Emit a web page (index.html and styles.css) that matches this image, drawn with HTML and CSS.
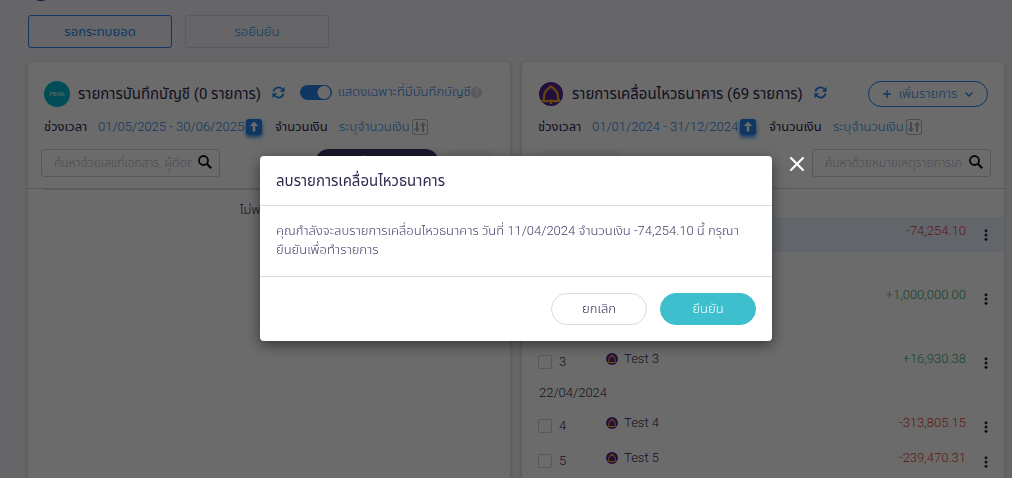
FILE: index.html
```html
<!DOCTYPE html>
<html lang="th">
<head>
<meta charset="utf-8">
<meta name="viewport" content="width=device-width, initial-scale=1">
<title>กระทบยอดธนาคาร</title>
<link rel="stylesheet" href="styles.css">
</head>
<body>
<svg class="defs" aria-hidden="true">
  <symbol id="bank" viewBox="0 0 24 24">
    <circle cx="12" cy="12" r="12" fill="#552494"/>
    <path d="M12 4.500C9 6.500 5.300 9.500 5.300 13C5.300 15.500 5.300 17 3.800 18.600C6.500 19.600 9 19.200 12 18.600C15 19.200 17.500 19.600 20.200 18.600C18.700 17 18.700 15.500 18.700 13C18.700 9.500 15 6.500 12 4.500ZM12 18V22" fill="none" stroke="#f0a818" stroke-width="2.200"/>
  </symbol>
  <symbol id="refresh" viewBox="0 0 16 16">
    <path d="M1.800 7A6.200 6.200 0 0 1 12.600 4M14.200 9A6.200 6.200 0 0 1 3.400 12" fill="none" stroke="currentColor" stroke-width="2.200"/>
    <path d="M15.500 1V7H9.500ZM.5 15V9H6.500Z" fill="currentColor"/>
  </symbol>
  <symbol id="search" viewBox="0 0 14 14">
    <circle cx="5.500" cy="5.500" r="4.500" fill="none" stroke="currentColor" stroke-width="1.800"/>
    <path d="M8.800 8.800L13.200 13.200" stroke="currentColor" stroke-width="2.200"/>
  </symbol>
  <symbol id="up" viewBox="0 0 16 16">
    <path d="M8 2.500L12.300 7H9.300V12.500H6.700V7H3.700Z" fill="currentColor"/>
  </symbol>
  <symbol id="sort" viewBox="0 0 16 16">
    <path d="M5 13L1.800 9.500H4V3H6V9.500H8.200ZM11 3L14.200 6.500H12V13H10V6.500H7.800Z" fill="currentColor"/>
  </symbol>
  <symbol id="dots" viewBox="0 0 4 12">
    <circle cx="2" cy="1.700" r="1.500"/><circle cx="2" cy="6" r="1.500"/><circle cx="2" cy="10.300" r="1.500"/>
  </symbol>
</svg>

<main class="page">
  <span class="account-dot"></span>
  <nav class="tabs">
    <button class="tab tab-active" type="button">รอกระทบยอด</button>
    <button class="tab" type="button">รอยืนยัน</button>
  </nav>

  <div class="panels">
    <section class="panel">
      <header class="panel-head">
        <div class="title-row">
          <span class="peak">PEAK</span>
          <h2 class="title">รายการบันทึกบัญชี (0 รายการ)</h2>
          <button class="icon-btn" type="button" aria-label="รีเฟรช"><svg class="refresh"><use href="#refresh"/></svg></button>
          <input class="switch" id="only" type="checkbox" checked>
          <label class="switch-label" for="only">แสดงเฉพาะที่มีบันทึกบัญชี</label>
          <span class="help">?</span>
        </div>
        <div class="filter-row">
          <span class="filter-name">ช่วงเวลา</span>
          <a class="filter-date" href="#">01/05/2025 - 30/06/2025</a>
          <button class="sort sort-on" type="button" aria-label="เรียงตามวันที่"><svg><use href="#up"/></svg></button>
          <span class="filter-name">จำนวนเงิน</span>
          <a class="filter-amount" href="#">ระบุจำนวนเงิน</a>
          <button class="sort" type="button" aria-label="เรียงตามจำนวนเงิน"><svg><use href="#sort"/></svg></button>
        </div>
        <div class="search-row">
          <div class="search">
            <input type="text" aria-label="ค้นหารายการบันทึกบัญชี" placeholder="ค้นหาด้วยเลขที่เอกสาร, ผู้ติดต่อ">
            <button class="icon-btn" type="button" aria-label="ค้นหา"><svg><use href="#search"/></svg></button>
          </div>
          <div class="bulk">
            <button class="pill pill-dark" type="button">+ เพิ่มรายการ</button>
            <button class="pill" type="button">จับคู่</button>
          </div>
        </div>
      </header>
      <div class="empty">ไม่พบข้อมูล</div>
    </section>

    <section class="panel">
      <header class="panel-head">
        <div class="title-row">
          <svg class="bank-logo"><use href="#bank"/></svg>
          <h2 class="title title-bank">รายการเคลื่อนไหวธนาคาร (69 รายการ)</h2>
          <button class="icon-btn" type="button" aria-label="รีเฟรช"><svg class="refresh"><use href="#refresh"/></svg></button>
          <button class="add" type="button">
            <svg width="8" height="8" viewBox="0 0 8 8"><path d="M4 0V8M0 4H8" stroke="currentColor" stroke-width="1.300"/></svg>
            เพิ่มรายการ
            <svg width="8" height="5" viewBox="0 0 8 5"><path d="M.5 .5L4 4L7.500 .5" fill="none" stroke="currentColor" stroke-width="1.300"/></svg>
          </button>
        </div>
        <div class="filter-row">
          <span class="filter-name">ช่วงเวลา</span>
          <a class="filter-date" href="#">01/01/2024 - 31/12/2024</a>
          <button class="sort sort-on" type="button" aria-label="เรียงตามวันที่"><svg><use href="#up"/></svg></button>
          <span class="filter-name">จำนวนเงิน</span>
          <a class="filter-amount" href="#">ระบุจำนวนเงิน</a>
          <button class="sort" type="button" aria-label="เรียงตามจำนวนเงิน"><svg><use href="#sort"/></svg></button>
        </div>
        <div class="search-row">
          <button class="pill pill-start" type="button">ลบรายการ</button>
          <div class="search">
            <input type="text" aria-label="ค้นหารายการเคลื่อนไหว" placeholder="ค้นหาด้วยหมายเหตุรายการเคลื่อนไหว">
            <button class="icon-btn" type="button" aria-label="ค้นหา"><svg><use href="#search"/></svg></button>
          </div>
        </div>
      </header>
      <table class="list">
        <colgroup><col class="col-check"><col><col class="col-amount"><col class="col-menu"></colgroup>
        <tbody>
          <tr class="day"><td colspan="4">11/04/2024</td></tr>
          <tr class="selected">
            <td class="pick"><label><input type="checkbox">1</label></td>
            <td><span class="name"><svg><use href="#bank"/></svg>Test 1</span></td>
            <td class="amount out">-74,254.10</td>
            <td class="menu"><button class="icon-btn" type="button" aria-label="เมนู"><svg><use href="#dots"/></svg></button></td>
          </tr>
          <tr class="day"><td colspan="4">17/04/2024</td></tr>
          <tr>
            <td class="pick"><label><input type="checkbox">2</label></td>
            <td><span class="name"><svg><use href="#bank"/></svg>Test 2</span></td>
            <td class="amount in">+1,000,000.00</td>
            <td class="menu"><button class="icon-btn" type="button" aria-label="เมนู"><svg><use href="#dots"/></svg></button></td>
          </tr>
          <tr class="day"><td colspan="4">19/04/2024</td></tr>
          <tr>
            <td class="pick"><label><input type="checkbox">3</label></td>
            <td><span class="name"><svg><use href="#bank"/></svg>Test 3</span></td>
            <td class="amount in">+16,930.38</td>
            <td class="menu"><button class="icon-btn" type="button" aria-label="เมนู"><svg><use href="#dots"/></svg></button></td>
          </tr>
          <tr class="day"><td colspan="4">22/04/2024</td></tr>
          <tr>
            <td class="pick"><label><input type="checkbox">4</label></td>
            <td><span class="name"><svg><use href="#bank"/></svg>Test 4</span></td>
            <td class="amount out">-313,805.15</td>
            <td class="menu"><button class="icon-btn" type="button" aria-label="เมนู"><svg><use href="#dots"/></svg></button></td>
          </tr>
          <tr>
            <td class="pick"><label><input type="checkbox">5</label></td>
            <td><span class="name"><svg><use href="#bank"/></svg>Test 5</span></td>
            <td class="amount out">-239,470.31</td>
            <td class="menu"><button class="icon-btn" type="button" aria-label="เมนู"><svg><use href="#dots"/></svg></button></td>
          </tr>
        </tbody>
      </table>
    </section>
  </div>
</main>

<div class="overlay">
  <div class="dialog" role="dialog" aria-modal="true" aria-labelledby="dialog-title">
    <button class="close" type="button" aria-label="ปิด"><svg viewBox="0 0 14 14"><path d="M1 1L13 13M13 1L1 13" stroke="currentColor" stroke-width="2.200" stroke-linecap="round"/></svg></button>
    <h1 class="dialog-title" id="dialog-title">ลบรายการเคลื่อนไหวธนาคาร</h1>
    <p class="dialog-text">คุณกำลังจะลบรายการเคลื่อนไหวธนาคาร วันที่ 11/04/2024 จำนวนเงิน -74,254.10 นี้ กรุณา<br>ยืนยันเพื่อทำรายการ</p>
    <div class="dialog-actions">
      <button class="btn" type="button">ยกเลิก</button>
      <button class="btn btn-primary" type="button">ยืนยัน</button>
    </div>
  </div>
</div>
</body>
</html>
```
FILE: styles.css
```css
* { box-sizing: border-box; }
html, body { height: 100%; }
body {
  margin: 0;
  overflow: hidden;
  background: #f4f4fa;
  color: #2f2a4e;
  font: 300 13px/20px Roboto, "Noto Sans", "Noto Sans Thai", sans-serif;
}
button, input { font: inherit; color: inherit; }
button { padding: 0; border: 0; background: none; white-space: nowrap; }
svg { display: block; flex: none; }
a { color: #2583e8; text-decoration: none; }
.defs { position: absolute; width: 0; height: 0; }

.page { position: relative; padding: 15px 8px 0 28px; }
.account-dot { position: absolute; left: 29px; top: -23px; width: 24px; height: 24px; border-radius: 50%; background: #552494; }
.tabs { display: flex; gap: 13px; margin-bottom: 14px; }
.tab { width: 144px; height: 33px; border: 1px solid #d3d3e2; border-radius: 3px; color: #2583e8; }
.tab-active { border-color: #2583e8; font-weight: 400; }

.panels { display: grid; grid-template-columns: 1fr 1fr; gap: 12px; }
.panel { min-width: 0; min-height: calc(100vh - 62px); border-radius: 5px 5px 0 0; background: #fff; box-shadow: 0 1px 5px rgba(60, 60, 90, .25); }
.panel-head { padding: 16px 13px 11px; border-bottom: 1px solid #cfcfe0; }
.title-row { display: flex; align-items: center; height: 32px; padding: 0 3px; }
.peak { display: grid; place-items: center; width: 26px; height: 26px; border-radius: 50%; background: #00b8d0; color: #fff; font-size: 6px; font-weight: 400; line-height: 26px; }
.bank-logo { width: 24px; height: 24px; margin: 0 1px; }
.title { width: 181px; margin: 0 13px 0 8px; font-size: 15px; font-weight: 400; line-height: 20px; white-space: nowrap; }
.title-bank { width: 229px; }
.icon-btn { display: block; color: #2583e8; }
.refresh { width: 13px; height: 13px; margin-bottom: 4px; }
.switch { appearance: none; flex: none; width: 32px; height: 15px; margin: 0 6px 4px 15px; border-radius: 8px; background: radial-gradient(circle at 24px 50%, #fff 6px, #2583e8 7px); }
.switch-label { width: 130px; margin-bottom: 4px; color: #2583e8; white-space: nowrap; }
.help { width: 11px; height: 11px; margin: 0 0 4px 3px; border-radius: 50%; background: #d3d3dc; color: #fff; font-size: 9px; font-weight: 600; line-height: 11px; text-align: center; }
.add { display: flex; align-items: center; justify-content: center; gap: 8px; width: 120px; height: 26px; margin-left: auto; border: 1px solid #2583e8; border-radius: 13px; color: #2583e8; }

.filter-row { display: flex; align-items: center; height: 33px; padding: 0 3px; white-space: nowrap; }
.filter-name { width: 54px; font-weight: 400; }
.filter-date { width: 148px; }
.filter-amount { width: 73px; margin-left: 10px; }
.sort { width: 16px; height: 16px; border-radius: 3px; color: #ababb0; box-shadow: inset 0 0 0 1px #b8b8be; }
.sort svg { width: 16px; height: 16px; }
.sort-on { margin-right: 13px; background: #2583e8; color: #fff; box-shadow: 0 2px 4px #2583e8; }

.search-row { display: flex; align-items: flex-start; justify-content: space-between; padding-top: 6px; }
.search { display: flex; align-items: center; width: 179px; height: 28px; padding: 0 7px 3px 12px; border: 1px solid #cfcfdc; border-radius: 3px; }
.search input { flex: 1; min-width: 0; height: 24px; margin: 3px 6px 0 0; padding: 0; border: 0; outline: 0; background: none; font-size: 12px; }
.search input::placeholder { color: #b8b8c6; opacity: 1; }
.search .icon-btn { color: #111; }
.search svg { width: 14px; height: 14px; }
.bulk { display: flex; gap: 6px; }
.pill { width: 52px; height: 28px; border-radius: 14px; background: #f4f4f6; color: #c5c5d0; }
.pill-dark { width: 124px; background: #3b3568; color: #fff; }
.pill-start { width: 86px; margin-left: 4px; }
.empty { margin: 0 16px; padding: 10px 0; border-top: 1px solid #dcdce8; text-align: center; }

.list { width: 100%; border-collapse: collapse; table-layout: fixed; }
.list td { height: 35px; padding: 0 0 7px; }
.list .day td { height: 29px; padding: 0 0 4px 17px; }
.list .day:first-child td { height: 28px; }
.col-check { width: 84px; }
.col-amount { width: 120px; }
.col-menu { width: 38px; }
.selected { background: #e9f2ff; }
.list .pick { padding: 0 0 2px 16px; }
.pick label { display: flex; align-items: center; gap: 7px; }
.pick input { appearance: none; width: 14px; height: 14px; margin: 0; border: 1px solid #cfcfdf; border-radius: 2px; }
.name { display: flex; align-items: center; gap: 6px; }
.name svg { width: 12px; height: 12px; }
.amount { text-align: right; }
.in { color: #34a56a; }
.out { color: #e0402a; }
.list .menu { padding: 1px 0 0 18px; }
.menu svg { width: 4px; height: 12px; fill: #2b2650; }

.overlay { position: fixed; inset: 0; display: flex; align-items: flex-start; justify-content: center; padding: 156px 0 16px 20px; background: rgba(0, 0, 0, .58); }
.dialog { position: relative; width: 512px; max-width: 100%; border-radius: 4px; background: #fff; box-shadow: 0 4px 14px rgba(0, 0, 0, .5); }
.close { position: absolute; top: 1px; right: -32px; color: #fff; }
.close svg { width: 14px; height: 14px; }
.dialog-title { margin: 0; padding: 15px 16px 14px; border-bottom: 1px solid #dcdae8; font-size: 15px; font-weight: 400; line-height: 20px; }
.dialog-text { margin: 0; padding: 15px 16px 17px; border-bottom: 1px solid #dcdae8; color: #45406a; font-size: 13px; line-height: 19px; }
.dialog-actions { display: flex; justify-content: flex-end; gap: 13px; padding: 16px; }
.btn { width: 96px; height: 32px; border: 1px solid #dcdae8; border-radius: 16px; }
.btn-primary { border-color: #3dbfcd; background: #3dbfcd; color: #fff; }
```
